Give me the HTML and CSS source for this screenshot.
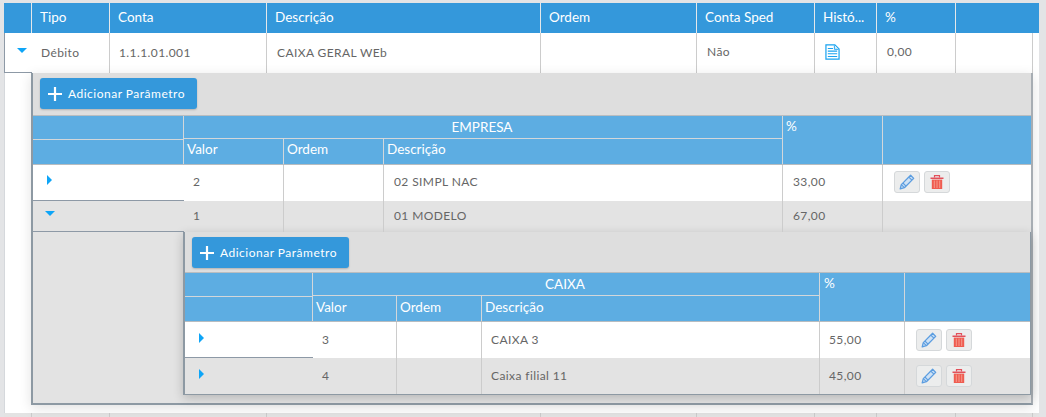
FILE: index.html
```html
<!DOCTYPE html>
<html lang="pt">
<head>
<meta charset="utf-8">
<title>Contas</title>
<link rel="stylesheet" href="styles.css">
</head>
<body>
<svg class="defs" width="0" height="0" aria-hidden="true">
  <symbol id="pencil" viewBox="0 0 16 16">
    <path d="M11.6 1.3 14.7 4.4 5.4 13.7 1.2 14.8 2.3 10.6Z" fill="#cfe2f5" stroke="#5b9de0" stroke-width="1.3" stroke-linejoin="round"/>
    <path d="M9.8 3.1 12.9 6.2M3.9 9 7 12.1M2.3 10.6 5.4 13.7" fill="none" stroke="#5b9de0" stroke-width="1.1"/>
  </symbol>
  <symbol id="trash" viewBox="0 0 16 16">
    <path d="M1.5 3.5H14.5V5H1.5Z" fill="#e2505a"/>
    <path d="M5.5 3.5V1.6H10.5V3.5" fill="none" stroke="#e2505a" stroke-width="1.2"/>
    <path d="M2.8 5.6H13.2V15H2.8Z" fill="#ef5c50"/>
    <path d="M5.3 6.5V14M8 6.5V14M10.7 6.5V14" stroke="#f59a8c" stroke-width="1"/>
  </symbol>
  <symbol id="plus" viewBox="0 0 14 14">
    <path d="M7 0V14M0 7H14" stroke="#fff" stroke-width="2.2" fill="none"/>
  </symbol>
</svg>
<main class="page">
  <div class="grid main-cols main-head">
    <div class="hc"></div><div class="hc">Tipo</div><div class="hc">Conta</div><div class="hc">Descrição</div><div class="hc">Ordem</div><div class="hc">Conta Sped</div><div class="hc">Histó...</div><div class="hc">%</div><div class="hc last"></div>
  </div>
  <div class="grid main-cols-body main-row">
    <div class="toggle-cell first"><span class="arrow-down"></span></div>
    <div class="dc near low-text">Débito</div><div class="dc near low-text">1.1.1.01.001</div><div class="dc low-text">CAIXA GERAL WEb</div><div class="dc"></div><div class="dc">Não</div>
    <div class="dc doc">
      <svg width="15" height="16" viewBox="0 0 16 18" preserveAspectRatio="none" aria-hidden="true">
        <path d="M1 1H10.5L15 5.5V17H1Z" fill="#fff" stroke="#1aa3f0" stroke-width="1.3"/>
        <path d="M10 1.5V6H14.5" fill="#d7effc" stroke="#1aa3f0" stroke-width="1"/>
        <path d="M3 5H8.5M3 8H13M3 11H13M3 14H13" stroke="#1aa3f0" stroke-width="1.2"/>
      </svg>
    </div>
    <div class="dc">0,00</div><div class="dc"></div>
  </div>
  <section class="panel outer">
    <div class="toolbar">
      <button class="add" type="button"><svg width="14" height="14" aria-hidden="true"><use href="#plus"/></svg>Adicionar Parâmetro</button>
    </div>
    <div class="grid lvl1-cols sub-head">
      <div class="sh blank"></div><div class="sh title lvl1-title">EMPRESA</div><div class="sh tall lvl1-pct">%</div><div class="sh tall lvl1-act"></div>
      <div class="sh blank low"></div><div class="sh low">Valor</div><div class="sh low">Ordem</div><div class="sh low">Descrição</div>
    </div>
    <div class="grid lvl1-cols srow white r36 raised">
      <div class="toggle-cell"><span class="arrow-right"></span></div>
      <div class="sd">2</div><div class="sd"></div><div class="sd wide">02 SIMPL NAC</div><div class="sd wide">33,00</div>
      <div class="sd actions"><button class="ib" type="button" aria-label="Editar"><svg width="16" height="16"><use href="#pencil"/></svg></button><button class="ib" type="button" aria-label="Excluir"><svg width="16" height="16"><use href="#trash"/></svg></button></div>
    </div>
    <div class="grid lvl1-cols srow grey r31">
      <div class="toggle-cell"><span class="arrow-down"></span></div>
      <div class="sd">1</div><div class="sd"></div><div class="sd wide">01 MODELO</div><div class="sd wide">67,00</div><div class="sd"></div>
    </div>
    <div class="nest-wrap">
      <section class="panel inner">
        <div class="toolbar t2">
          <button class="add" type="button"><svg width="14" height="14" aria-hidden="true"><use href="#plus"/></svg>Adicionar Parâmetro</button>
        </div>
        <div class="grid lvl2-cols sub-head">
          <div class="sh blank"></div><div class="sh title lvl2-title">CAIXA</div><div class="sh tall lvl2-pct">%</div><div class="sh tall lvl2-act"></div>
          <div class="sh blank low"></div><div class="sh low">Valor</div><div class="sh low">Ordem</div><div class="sh low">Descrição</div>
        </div>
        <div class="grid lvl2-cols srow white r36">
          <div class="toggle-cell"><span class="arrow-right"></span></div>
          <div class="sd">3</div><div class="sd"></div><div class="sd">CAIXA 3</div><div class="sd">55,00</div>
          <div class="sd actions"><button class="ib" type="button" aria-label="Editar"><svg width="16" height="16"><use href="#pencil"/></svg></button><button class="ib" type="button" aria-label="Excluir"><svg width="16" height="16"><use href="#trash"/></svg></button></div>
        </div>
        <div class="grid lvl2-cols srow grey r36">
          <div class="toggle-cell nob"><span class="arrow-right"></span></div>
          <div class="sd">4</div><div class="sd"></div><div class="sd">Caixa filial 11</div><div class="sd">45,00</div>
          <div class="sd actions"><button class="ib" type="button" aria-label="Editar"><svg width="16" height="16"><use href="#pencil"/></svg></button><button class="ib" type="button" aria-label="Excluir"><svg width="16" height="16"><use href="#trash"/></svg></button></div>
        </div>
      </section>
    </div>
  </section>
  <div class="grid main-cols-body next-row">
    <div class="nc"></div><div class="nc"></div><div class="nc"></div><div class="nc"></div><div class="nc"></div><div class="nc"></div><div class="nc"></div><div class="nc"></div><div class="nc"></div>
  </div>
</main>
</body>
</html>
```
FILE: styles.css
```css
* { box-sizing: border-box; }
html, body { margin: 0; padding: 0; height: 100%; overflow: hidden; }
body { background: #e3e4e6; font-family: Lato, "Liberation Sans", sans-serif; color: #666; }
.defs { display: block; height: 0; }
.page { margin: 3px 0 0 4px; width: 1035px; height: 414px; background: #fff; box-shadow: inset 1px 0 0 #d5d8dc; overflow: hidden; }
.grid { display: grid; }
.main-cols { grid-template-columns: 28px 78px 157px 274px 156px 118px 62px 79px 83px; }
.main-cols-body { grid-template-columns: 28px 78px 157px 274px 156px 118px 62px 79px 77px; }
.main-head { height: 30px; background: #3498db; }
.hc { border-right: 1px solid #e4e8ea; color: #fff; font-size: 13.5px; line-height: 29px; padding-left: 8px; white-space: nowrap; overflow: hidden; }
.hc.last { border-right: 0; }
.main-row { height: 40px; }
.dc { border-right: 1px solid #ccc; font-size: 12px; letter-spacing: .4px; line-height: 38px; padding-left: 10px; color: #666; }
.dc.low-text { line-height: 40px; }
.dc.near { padding-left: 9px; }
.doc { padding: 11px 0 0 10px; line-height: 0; }
.toggle-cell { border-bottom: 1px solid #8d99a6; position: relative; }
.toggle-cell.first { border-left: 1px solid #8d99a6; background: #fff; }
.toggle-cell.nob { border-bottom: 0; }
.arrow-down { position: absolute; width: 0; height: 0; border-left: 5px solid transparent; border-right: 5px solid transparent; border-top: 5px solid #0ea5f7; }
.arrow-right { position: absolute; width: 0; height: 0; border-top: 5px solid transparent; border-bottom: 5px solid transparent; border-left: 5px solid #0ea5f7; }
.first .arrow-down { left: 12px; top: 15px; }
.lvl1-cols .arrow-right { left: 14px; top: 10px; }
.lvl1-cols .arrow-down { left: 12px; top: 10px; }
.lvl2-cols .arrow-right { left: 14px; top: 11px; }
.panel.outer { margin-left: 27px; width: 1002px; height: 332px; background: #e3e3e3; border-left: 2px solid #8d99a3; border-right: 2px solid #a7adb3; border-bottom: 2px solid #8d99a3; box-shadow: 0 3px 12px rgba(0,0,0,.12); position: relative; }
.toolbar { height: 43px; background: #dedede; padding-top: 5px; padding-left: 7px; border-bottom: 1px solid #b9bdc0; }
.toolbar.t2 { height: 41px; }
.add { display: flex; align-items: center; gap: 6px; width: 157px; height: 31px; padding: 0 0 0 8px; border: 0; border-radius: 3px; background: #3498db; box-shadow: 0 1px 2px rgba(0,0,0,.2); color: #fff; font-family: Lato, "Liberation Sans", sans-serif; font-size: 12px; font-weight: 400; letter-spacing: .5px; white-space: nowrap; }
.sub-head { background: #5dade2; color: #fff; grid-template-rows: 23px 25px; height: 48px; }
.lvl1-cols { grid-template-columns: 151px 100px 100px 399px 100px 148px; }
.lvl2-cols { grid-template-columns: 128px 84px 85px 338px 85px 125px; }
.sh { border-right: 1px solid #d3d7da; font-size: 13.5px; line-height: 23px; padding-left: 3px; white-space: nowrap; }
.sh.title { text-align: center; border-bottom: 1px solid #d3d7da; padding-left: 0; padding-right: 2px; }
.sh.tall { line-height: 20px; }
.sh.low { line-height: 22px; }
.lvl1-cols .sh.low { line-height: 20px; }
.sh.blank.low { border-top: 1px solid #d3d7da; grid-column: 1; grid-row: 2; }
.lvl1-title { grid-column: 2 / 5; grid-row: 1; }
.lvl1-pct { grid-column: 5; grid-row: 1 / 3; }
.lvl1-act { grid-column: 6; grid-row: 1 / 3; border-right: 0; }
.lvl2-title { grid-column: 2 / 5; grid-row: 1; }
.lvl2-pct { grid-column: 5; grid-row: 1 / 3; padding-left: 4px; }
.lvl2-act { grid-column: 6; grid-row: 1 / 3; border-right: 0; }
.srow .sd { border-right: 1px solid #ccc; font-size: 12px; letter-spacing: .4px; color: #666; padding-left: 9px; padding-bottom: 2px; display: flex; align-items: center; white-space: nowrap; }
.srow .sd.wide { padding-left: 10px; }
.srow .sd:last-child { border-right: 0; }
.srow.raised .sd { padding-bottom: 4px; }
.white { background: #fff; border-top: 1px solid #b7bcc0; }
.grey { background: #e3e3e3; }
.r36 { height: 37px; }
.r31 { height: 31px; }
.lvl2-cols.r36.grey { height: 36px; }
.srow .sd.actions { padding-left: 11px; gap: 4px; padding-bottom: 0; }
.srow.raised .sd.actions { padding-bottom: 2px; }
.ib { width: 26px; height: 22px; padding: 0; border: 1px solid #d5d8da; border-radius: 3px; background: #eceded; display: flex; align-items: center; justify-content: center; }
.nest-wrap { padding-left: 150px; height: 164px; background: #e3e3e3; }
.panel.inner { height: 163px; background: #e3e3e3; border-left: 2px solid #8d99a3; border-right: 1px solid #8d99a3; border-bottom: 2px solid #8d99a3; box-shadow: 0 3px 10px rgba(0,0,0,.2); }
.next-row { margin-top: 8px; height: 5px; background: #e3e3e3; }
.nc { border-right: 1px solid #ccc; }
```
